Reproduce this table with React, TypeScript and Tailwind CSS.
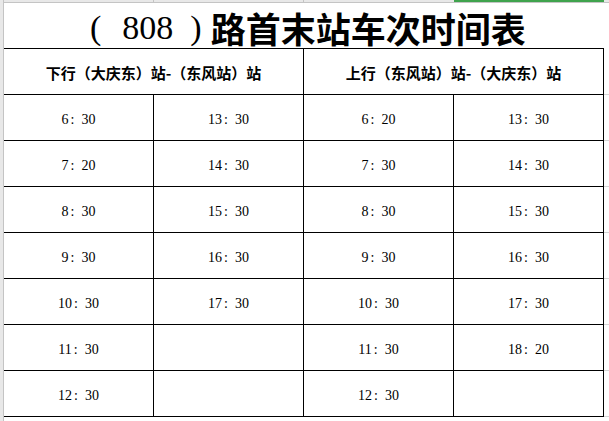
import React from "react";

const serif = { fontFamily: '"Liberation Serif", "Noto Sans CJK SC", serif' };

const down = ["6:30", "7:20", "8:30", "9:30", "10:30", "11:30", "12:30"];
const down2 = ["13:30", "14:30", "15:30", "16:30", "17:30", "", ""];
const up = ["6:20", "7:30", "8:30", "9:30", "10:30", "11:30", "12:30"];
const up2 = ["13:30", "14:30", "15:30", "16:30", "17:30", "18:20", ""];

function Time({ value }: { value: string }) {
  if (!value) return null;
  const [h, m] = value.split(":");
  return (
    <span className="flex items-baseline">
      <span>{h}</span>
      <span className="ml-[2px]">:</span>
      <span className="ml-[7px]">{m}</span>
    </span>
  );
}

function Cell({ children, wide }: { children?: React.ReactNode; wide?: boolean }) {
  return (
    <div
      className={
        "h-[46px] border-r border-b border-black flex items-center justify-center pt-[4px] " +
        (wide ? "col-span-2" : "")
      }
    >
      {children}
    </div>
  );
}

function Filler() {
  return <div className="h-[46px] border-b border-[#d4d4d4]" />;
}

export default function App() {
  return (
    <div className="w-[609px] h-[421px] bg-white flex overflow-hidden text-black">
      <div className="w-[4px] shrink-0 bg-[#e8e8e8] border-r border-[#c4c4c4]" />
      <div className="flex-1 flex flex-col">
        <div className="h-[3px] grid grid-cols-[150px_150px_150px_150px_5px] bg-[#e8e8e8] border-b border-[#c4c4c4]">
          <div className="border-r border-[#c4c4c4]" />
          <div className="border-r border-[#c4c4c4]" />
          <div />
          <div className="bg-[#3fa34d] h-[2px]" />
          <div />
        </div>

        <div className="h-[45px] flex items-center pl-[86px] pt-[4px] text-[34px] leading-none">
          <span style={serif}>(</span>
          <span style={serif} className="ml-[21px]">808</span>
          <span style={serif} className="ml-[17px]">)</span>
          <span
            className="ml-[9px] font-bold text-[35px]"
            style={{ fontFamily: '"Noto Sans CJK SC", sans-serif' }}
          >
            路首末站车次时间表
          </span>
        </div>

        <div className="grid grid-cols-[150px_150px_150px_150px_5px]">
          <div className="col-span-4 h-px bg-black" />
          <div />

          <div
            className="col-span-4 grid grid-cols-[150px_150px_150px_150px] text-[15px] font-bold"
            style={{ fontFamily: '"Noto Sans CJK SC", sans-serif' }}
          >
            <Cell wide>下行（大庆东）站-（东风站）站</Cell>
            <Cell wide>上行（东风站）站-（大庆东）站</Cell>
          </div>
          <Filler />

          {down.map((t, i) => (
            <React.Fragment key={i}>
              <div className="col-span-4 grid grid-cols-[150px_150px_150px_150px] text-[14px]" style={serif}>
                <Cell><Time value={t} /></Cell>
                <Cell><Time value={down2[i]} /></Cell>
                <Cell><Time value={up[i]} /></Cell>
                <Cell><Time value={up2[i]} /></Cell>
              </div>
              <Filler />
            </React.Fragment>
          ))}
        </div>
      </div>
    </div>
  );
}
